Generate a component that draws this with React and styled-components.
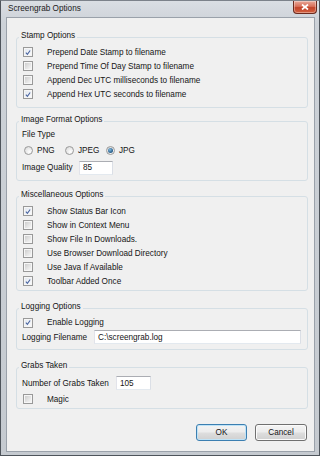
import React from "react";
import styled, { createGlobalStyle } from "styled-components";

const FONT = `"Liberation Sans", Arial, sans-serif`;

const GlobalStyle = createGlobalStyle`
  html, body {
    margin: 0;
    padding: 0;
  }
  body {
    width: 320px;
    height: 456px;
    overflow: hidden;
    background: #ffffff;
  }
`;

const Window = styled.div`
  box-sizing: border-box;
  width: 320px;
  height: 456px;
  display: flex;
  flex-direction: column;
  border: 1px solid #4e545b;
  border-top-color: #7c828a;
  background: linear-gradient(180deg, #dadee3 0px, #cdd2d8 22px, #c5cad0 100%);
  font-family: ${FONT};
  font-size: 8.2px;
  color: #151515;
`;

const TitleBar = styled.div`
  height: 16px;
  display: flex;
  align-items: flex-start;
  justify-content: space-between;
  padding-left: 7px;
`;

const Title = styled.div`
  line-height: 16px;
  color: #1a1a1a;
`;

const CloseButton = styled.div`
  width: 24px;
  height: 13px;
  margin-right: 2px;
  box-sizing: border-box;
  border: 1px solid #6b2a1e;
  border-top: none;
  border-radius: 0 0 4px 4px;
  background: linear-gradient(180deg, #e9a99a 0%, #d8705a 45%, #c2442b 55%, #d4613f 100%);
  display: flex;
  align-items: center;
  justify-content: center;
  box-shadow: inset 0 0 0 1px rgba(255, 255, 255, 0.35);
`;

const Client = styled.div`
  flex: 1;
  margin: 0 4px 3px 5px;
  border: 1px solid #9aa1aa;
  background: #f0f0f0;
  padding: 0 6px 0 9px;
  display: flex;
  flex-direction: column;
`;

const Group = styled.fieldset`
  margin: ${(p) => p.$mt}px 0 0 0;
  padding: 0 6px ${(p) => p.$pb}px 6px;
  border: 1px solid #d5dfe5;
  border-radius: 3px;
  min-width: 0;
`;

const Legend = styled.legend`
  margin-left: -4px;
  padding: 0 2px 3px 2px;
  line-height: 12px;
  color: #151515;
`;

const Row = styled.div`
  height: ${(p) => p.$h || 14}px;
  margin-top: ${(p) => p.$mt || 0}px;
  display: flex;
  align-items: center;
  white-space: nowrap;
`;

const Box = styled.span`
  box-sizing: border-box;
  width: 10px;
  height: 10px;
  flex: none;
  border: 1px solid #999999;
  background: #f6f6f6;
  padding: 1px;
  display: flex;
  align-items: center;
  justify-content: center;
`;

const BoxInner = styled.span`
  width: 100%;
  height: 100%;
  background: ${(p) =>
    p.$checked
      ? "linear-gradient(135deg, #e4e9f0 0%, #f8f9fb 100%)"
      : "linear-gradient(135deg, #cecece 0%, #e6e6e6 60%, #f6f6f6 100%)"};
  display: flex;
  align-items: center;
  justify-content: center;
`;

const CheckLabel = styled.span`
  margin-left: 14px;
`;

const Checkbox = ({ checked, children, h, mt }) => (
  <Row $h={h} $mt={mt}>
    <Box>
      <BoxInner $checked={checked}>
        {checked && (
          <svg width="7" height="7" viewBox="0 0 7 7">
            <path d="M1 3.6 L2.8 5.6 L6 1.2" fill="none" stroke="#4a64a0" strokeWidth="1.3" />
          </svg>
        )}
      </BoxInner>
    </Box>
    <CheckLabel>{children}</CheckLabel>
  </Row>
);

const FieldLabel = styled.span`
  width: ${(p) => p.$w}px;
  flex: none;
  margin-left: -1px;
`;

const TextInput = styled.input`
  box-sizing: border-box;
  width: ${(p) => p.$w}px;
  height: 14px;
  margin: 0;
  padding: 0 0 0 3px;
  border: 1px solid;
  border-color: #abadb3 #dbdfe6 #e3e9ef #e2e3ea;
  background: #ffffff;
  font-family: ${FONT};
  font-size: 8.2px;
  color: #151515;
  outline: none;
`;

const RadioOption = styled.span`
  width: 40px;
  flex: none;
  display: flex;
  align-items: center;
  margin-left: 1px;
`;

const RadioCircle = styled.span`
  box-sizing: border-box;
  width: 9px;
  height: 9px;
  flex: none;
  border-radius: 50%;
  border: 1px solid #9a9a9a;
  background: radial-gradient(circle at 65% 70%, #ffffff 0%, #e6e6e6 60%, #d2d2d2 100%);
  display: flex;
  align-items: center;
  justify-content: center;
`;

const RadioDot = styled.span`
  width: 5px;
  height: 5px;
  border-radius: 50%;
  background: radial-gradient(circle at 40% 35%, #86bde2 0%, #2f6591 60%, #1d4468 100%);
`;

const RadioText = styled.span`
  margin-left: 4px;
`;

const Radio = ({ checked, children }) => (
  <RadioOption>
    <RadioCircle>{checked && <RadioDot />}</RadioCircle>
    <RadioText>{children}</RadioText>
  </RadioOption>
);

const ButtonBar = styled.div`
  margin-top: 15px;
  padding-right: 1px;
  display: flex;
  justify-content: flex-end;
  gap: 8px;
`;

const Button = styled.button`
  box-sizing: border-box;
  width: ${(p) => p.$w}px;
  height: 17px;
  margin: 0;
  padding: 0;
  border: 1px solid ${(p) => (p.$default ? "#3c7fb1" : "#707070")};
  border-radius: 3px;
  background: linear-gradient(180deg, #f4f4f4 0%, #ececec 48%, #dedede 52%, #d0d0d0 100%);
  box-shadow: inset 0 0 0 1px ${(p) => (p.$default ? "#bfe3f7" : "#fbfbfb")};
  font-family: ${FONT};
  font-size: 8.2px;
  color: #151515;
`;

export default function App() {
  return (
    <>
      <GlobalStyle />
      <Window>
        <TitleBar>
          <Title>Screengrab Options</Title>
          <CloseButton>
            <svg width="8" height="6" viewBox="0 0 8 6">
              <path d="M1 0.5 L7 5.5 M7 0.5 L1 5.5" stroke="#ffffff" strokeWidth="1.7" />
            </svg>
          </CloseButton>
        </TitleBar>
        <Client>
          <Group $mt={12} $pb={6}>
            <Legend>Stamp Options</Legend>
            <Checkbox checked>Prepend Date Stamp to filename</Checkbox>
            <Checkbox>Prepend Time Of Day Stamp to filename</Checkbox>
            <Checkbox>Append Dec UTC milliseconds to filename</Checkbox>
            <Checkbox checked>Append Hex UTC seconds to filename</Checkbox>
          </Group>

          <Group $mt={6} $pb={5}>
            <Legend>Image Format Options</Legend>
            <Row $h={11}>
              <FieldLabel $w={60}>File Type</FieldLabel>
            </Row>
            <Row $h={20}>
              <Radio>PNG</Radio>
              <Radio>JPEG</Radio>
              <Radio checked>JPG</Radio>
            </Row>
            <Row $h={15}>
              <FieldLabel $w={57}>Image Quality</FieldLabel>
              <TextInput $w={34} value="85" readOnly />
            </Row>
          </Group>

          <Group $mt={8} $pb={2}>
            <Legend>Miscellaneous Options</Legend>
            <Checkbox checked>Show Status Bar Icon</Checkbox>
            <Checkbox>Show in Context Menu</Checkbox>
            <Checkbox>Show File In Downloads.</Checkbox>
            <Checkbox>Use Browser Download Directory</Checkbox>
            <Checkbox>Use Java If Available</Checkbox>
            <Checkbox checked>Toolbar Added Once</Checkbox>
          </Group>

          <Group $mt={10} $pb={4}>
            <Legend>Logging Options</Legend>
            <Checkbox checked h={13}>Enable Logging</Checkbox>
            <Row $h={16}>
              <FieldLabel $w={72}>Logging Filename</FieldLabel>
              <TextInput $w={209} value="C:\screengrab.log" readOnly />
            </Row>
          </Group>

          <Group $mt={10} $pb={1}>
            <Legend>Grabs Taken</Legend>
            <Row $h={16}>
              <FieldLabel $w={94}>Number of Grabs Taken</FieldLabel>
              <TextInput $w={35} value="105" readOnly />
            </Row>
            <Checkbox h={16}>Magic</Checkbox>
          </Group>

          <ButtonBar>
            <Button $w={51} $default>OK</Button>
            <Button $w={52}>Cancel</Button>
          </ButtonBar>
        </Client>
      </Window>
    </>
  );
}
